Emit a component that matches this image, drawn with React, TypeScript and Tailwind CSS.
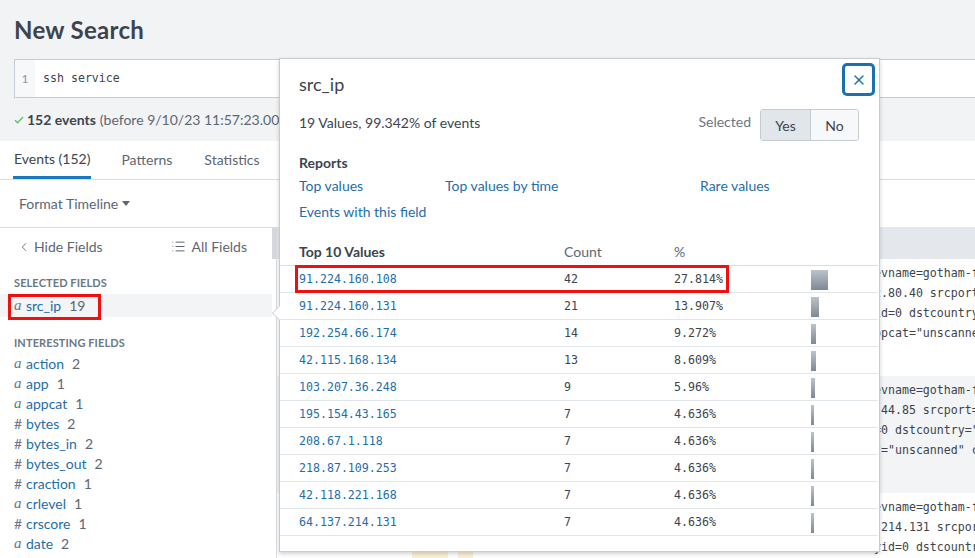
import { ChevronLeft, List, X } from "lucide-react";

const fields = [
  { t: "a", name: "action", n: 2 },
  { t: "a", name: "app", n: 1 },
  { t: "a", name: "appcat", n: 1 },
  { t: "#", name: "bytes", n: 2 },
  { t: "#", name: "bytes_in", n: 2 },
  { t: "#", name: "bytes_out", n: 2 },
  { t: "#", name: "craction", n: 1 },
  { t: "a", name: "crlevel", n: 1 },
  { t: "#", name: "crscore", n: 1 },
  { t: "a", name: "date", n: 2 },
];

// value, count, percent, bar width (px)
const topValues: [string, number, string, number][] = [
  ["91.224.160.108", 42, "27.814%", 17],
  ["91.224.160.131", 21, "13.907%", 8],
  ["192.254.66.174", 14, "9.272%", 5],
  ["42.115.168.134", 13, "8.609%", 5],
  ["103.207.36.248", 9, "5.96%", 4],
  ["195.154.43.165", 7, "4.636%", 3],
  ["208.67.1.118", 7, "4.636%", 3],
  ["218.87.109.253", 7, "4.636%", 3],
  ["42.118.221.168", 7, "4.636%", 3],
  ["64.137.214.131", 7, "4.636%", 3],
];

const events = [
  {
    bg: "bg-white",
    lines: [
      'evname=gotham-fw devid="FGT60F"',
      "2.80.40 srcport=51422 dstip=",
      'id=0 dstcountry="Reserved"',
      'ppcat="unscanned" crscore=5',
    ],
  },
  {
    bg: "bg-[#f3f4f6]",
    lines: [
      'evname=gotham-fw devid="FGT60F"',
      ".44.85 srcport=39910 dstip=",
      '=0 dstcountry="Reserved"',
      't="unscanned" crscore=5',
    ],
  },
  {
    bg: "bg-white",
    lines: [
      'evname=gotham-fw devid="FGT60F"',
      ".214.131 srcport=50214 dstip=",
      'yid=0 dstcountry="Reserved"',
    ],
  },
];

const mono = "font-['DejaVu_Sans_Mono','Liberation_Mono',monospace]";

function FieldType({ t }: { t: string }) {
  if (t === "a") {
    return (
      <span className="inline-block w-[12px] font-['Liberation_Serif',serif] text-[15px] italic text-[#6b7785]">
        a
      </span>
    );
  }
  return <span className="inline-block w-[12px] text-[#6b7785]">#</span>;
}

function Sidebar() {
  return (
    <div className="relative w-[277px] shrink-0 border-r border-t border-[#d8dde3]">
      {/* scrollbar thumb */}
      <div className="absolute right-0 top-0 h-[31px] w-[4px] bg-[#d3d8de]" />
      <div className="flex h-[37px] items-center justify-between pl-[17px] pr-[29px] text-[#5c6773]">
        <span className="flex items-center gap-[2px]">
          <ChevronLeft size={14} strokeWidth={1.5} />
          <span className="ml-[1px]">Hide Fields</span>
        </span>
        <span className="flex items-center gap-[6px]">
          <List size={15} strokeWidth={1.6} />
          All Fields
        </span>
      </div>
      <div className="mt-[8px] pl-[14px] text-[11px] font-bold uppercase leading-[20px] tracking-[0.1px] text-[#6b7785]">
        Selected Fields
      </div>
      <div className="mr-[4px] mt-[1px] flex h-[23px] items-center bg-[#f2f4f5] pl-[14px]">
        <FieldType t="a" />
        <span className="text-[#1f6ea8]">src_ip</span>
        <span className="ml-[8px] text-[#5c6773]">19</span>
      </div>
      <div className="mt-[16px] pl-[14px] text-[11px] font-bold uppercase leading-[20px] tracking-[0.1px] text-[#6b7785]">
        Interesting Fields
      </div>
      <div className="pl-[14px]">
        {fields.map((f) => (
          <div key={f.name} className="flex h-[20px] items-center">
            <FieldType t={f.t} />
            <span className="text-[#1f6ea8]">{f.name}</span>
            <span className="ml-[8px] text-[#5c6773]">{f.n}</span>
          </div>
        ))}
      </div>
    </div>
  );
}

function EventsArea() {
  return (
    <div className="min-w-0 flex-1">
      <div className="h-[32px] bg-[#e4e8ec]" />
      {events.map((e, i) => (
        <div key={i} className={`h-[117px] pt-[4px] ${e.bg}`}>
          {e.lines.map((l, j) => (
            <div
              key={j}
              className={`whitespace-pre pl-[597px] text-[11.6px] leading-[20px] text-[#3c444d] ${mono}`}
            >
              {l}
            </div>
          ))}
        </div>
      ))}
    </div>
  );
}

function FieldPopup() {
  return (
    <div className="absolute left-[279px] top-[58px] h-[494px] w-[601px] border border-[#c3cbd4] bg-white shadow-[0_2px_4px_rgba(0,0,0,0.18)]">
      {/* arrow pointing at the field */}
      <div className="absolute left-[-8px] top-[246px] h-0 w-0 border-y-[8px] border-r-[8px] border-y-transparent border-r-[#c3cbd4]" />
      <div className="absolute left-[-7px] top-[247px] h-0 w-0 border-y-[7px] border-r-[7px] border-y-transparent border-r-white" />

      <button className="absolute right-[4px] top-[4px] flex h-[33px] w-[33px] items-center justify-center rounded-[5px] border-[3px] border-[#1c6fb0] text-[#1c6fb0]">
        <X size={16} strokeWidth={2} />
      </button>

      <div className="pl-[19px] pr-[20px] pt-[13px]">
        <div className="text-[18px] leading-[24px] text-[#3c444d]">src_ip</div>
        <div className="mt-[13px] flex h-[32px] items-start justify-between">
          <span className="leading-[28px]">19 Values, 99.342% of events</span>
          <div className="flex items-start">
            <span className="mr-[9px] leading-[26px] text-[#6b7785]">Selected</span>
            <div className="flex h-[32px] overflow-hidden rounded-[3px] border border-[#c3cbd4]">
              <span className="flex w-[50px] items-center justify-center border-r border-[#c3cbd4] bg-[#e1e6eb]">
                Yes
              </span>
              <span className="flex w-[47px] items-center justify-center bg-[#f7f8fa]">No</span>
            </div>
          </div>
        </div>
        <div className="mt-[12px] font-bold leading-[20px]">Reports</div>
        <div className="grid grid-cols-[146px_255px_1fr] leading-[26px] text-[#1f6ea8]">
          <span>Top values</span>
          <span>Top values by time</span>
          <span>Rare values</span>
          <span className="col-span-3">Events with this field</span>
        </div>
      </div>

      <div className="relative mr-[1px] mt-[13px]">
        <div className="grid h-[28px] grid-cols-[265px_110px_137px_1fr] items-center border-b border-[#d8dde3] pl-[19px]">
          <span className="font-bold">Top 10 Values</span>
          <span className="text-[#5c6773]">Count</span>
          <span className="text-[#5c6773]">%</span>
          <span />
        </div>
        {topValues.map(([v, c, p, w]) => (
          <div
            key={v}
            className={`grid h-[27px] grid-cols-[265px_110px_137px_1fr] items-center border-b border-[#e1e6eb] pl-[19px] pt-[1px] text-[11.6px] ${mono}`}
          >
            <span className="text-[#1f6ea8]">{v}</span>
            <span className="text-[#3c444d]">{c}</span>
            <span className="text-[#3c444d]">{p}</span>
            <span
              className="h-[20px] bg-linear-to-b from-[#bcc3ca] to-[#7f8994]"
              style={{ width: w }}
            />
          </div>
        ))}
        {/* highlight box */}
        <div className="absolute left-[15px] top-[27px] h-[28px] w-[434px] border-[3px] border-[#f01010]" />
      </div>
    </div>
  );
}

export default function App() {
  return (
    <div className="relative h-[558px] w-[975px] overflow-hidden bg-white font-['Lato',sans-serif] text-[14px] text-[#3c444d]">
      <div className="bg-[#f2f3f5]">
        <div className="h-[59px] pl-[14px] pt-[15px] text-[24px] font-bold leading-[30px] tracking-[0.3px] text-[#3c444d]">
          New Search
        </div>
        <div className="ml-[14px] flex h-[39px] w-[980px] border border-[#c3cbd4] bg-white">
          <div className="flex w-[20px] items-center justify-center bg-[#f7f8fa] text-[12px] text-[#8b96a1]">
            1
          </div>
          <div className={`flex items-center pl-[8px] text-[11.6px] ${mono}`}>ssh service</div>
        </div>
        <div className="flex h-[43px] items-center pl-[14px] text-[#5c6773]">
          <svg width="10" height="8" viewBox="0 0 10 8" className="mr-[3px]">
            <path d="M1 4.2 L3.6 6.8 L9 1" fill="none" stroke="#5cc05c" strokeWidth="1.3" />
          </svg>
          <span className="font-bold text-[#3c444d]">152 events</span>
          <span className="ml-[4px]">(before 9/10/23 11:57:23.000 AM)</span>
        </div>
      </div>

      <div className="flex h-[39px] items-end border-b border-[#d8dde3] pl-[13px]">
        <div className="flex h-full items-center border-b-[3px] border-[#1a7ac0] px-[1px] text-[#3c444d]">
          Events (152)
        </div>
        <div className="ml-[30px] flex h-full items-center pb-[2px] text-[#5c6773]">Patterns</div>
        <div className="ml-[32px] flex h-full items-center pb-[2px] text-[#5c6773]">Statistics</div>
        <div className="ml-[32px] flex h-full items-center pb-[2px] text-[#5c6773]">Visualization</div>
      </div>

      <div className="flex h-[47px] items-center pl-[19px] text-[#5c6773]">
        Format Timeline
        <svg width="8" height="5" viewBox="0 0 8 5" className="ml-[4px]">
          <path d="M0 0 L8 0 L4 5 Z" fill="#5c6773" />
        </svg>
      </div>

      <div className="flex">
        <Sidebar />
        <EventsArea />
      </div>

      {/* sidebar annotation box */}
      <div className="absolute left-[8px] top-[294px] h-[26px] w-[93px] border-[3px] border-[#f01010]" />

      {/* search term highlights peeking below the popup */}
      <div className="absolute left-[412px] top-[551px] h-[7px] w-[36px] bg-[#fcf1d8]" />
      <div className="absolute left-[458px] top-[551px] h-[7px] w-[15px] bg-[#fcf1d8]" />

      <FieldPopup />
    </div>
  );
}
